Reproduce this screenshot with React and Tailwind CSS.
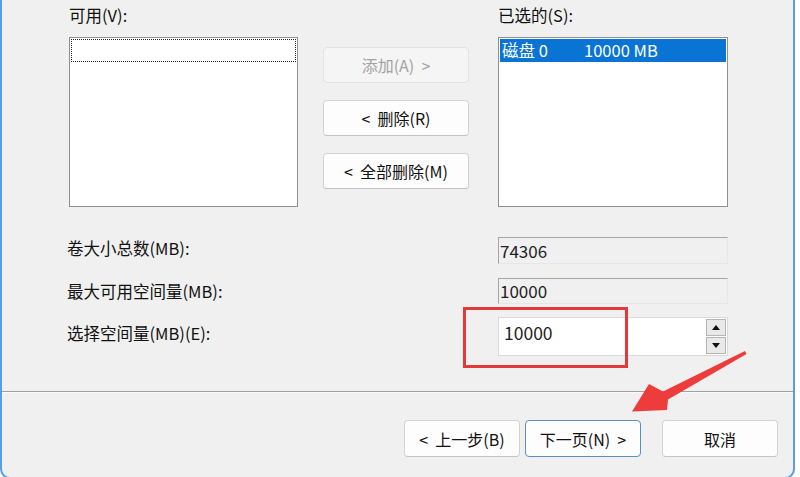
import React from "react";

const font = { fontFamily: '"Noto Sans CJK SC", "Noto Sans", sans-serif' };

function Btn({ children, disabled, primary, className = "" }) {
  let cls =
    "flex items-center justify-center rounded-[4px] border text-[16px] leading-none ";
  if (disabled) cls += "bg-[#f5f5f5] border-[#e3e3e3] text-[#a3a3a3] ";
  else if (primary)
    cls += "bg-[#fdfdfd] border-[#5b8fbf] text-[#111] ";
  else cls += "bg-[#fdfdfd] border-[#d3d3d3] border-b-[#c4c4c4] text-[#111] ";
  return <div className={cls + className}>{children}</div>;
}

export default function App() {
  return (
    <div
      className="w-[800px] h-[477px] bg-white overflow-hidden relative text-[#111]"
      style={font}
    >
      <div className="w-[795px] h-[479px] bg-[#f0f0f0] border-x-2 border-b-2 border-[#5a9fdb] rounded-b-[10px] flex flex-col">
        <div className="h-[391px] pl-[67px] pt-[4px] flex flex-col">
          <div className="flex">
            <div className="w-[229px] flex flex-col">
              <div className="h-[22px] leading-[22px] text-[16.5px]">可用(V):</div>
              <div className="mt-[11px] h-[170px] bg-white border border-[#8f8f8f] p-px">
                <div className="h-[23px] border border-dotted border-[#222]" />
              </div>
            </div>
            <div className="ml-[25px] w-[146px] pt-[43px] flex flex-col gap-[17px]">
              <Btn disabled className="h-[36px]">
                添加(A)&nbsp;&nbsp;&gt;
              </Btn>
              <Btn className="h-[36px]">&lt;&nbsp;&nbsp;删除(R)</Btn>
              <Btn className="h-[36px]">&lt;&nbsp;&nbsp;全部删除(M)</Btn>
            </div>
            <div className="ml-[29px] w-[230px] flex flex-col">
              <div className="h-[22px] leading-[22px] text-[16.5px]">已选的(S):</div>
              <div className="mt-[11px] h-[170px] bg-white border border-[#8f8f8f] p-px">
                <div className="h-[23px] bg-[#0a74d4] text-white text-[16.5px] leading-[23px] flex pl-[2px]">
                  <span className="w-[82px]">磁盘 0</span>
                  <span>10000 MB</span>
                </div>
              </div>
            </div>
          </div>

          <div className="mt-[30px] flex flex-col text-[16.5px]">
            <div className="flex items-center h-[27px]">
              <div className="w-[431px] -ml-[2px] pr-[2px] -mt-[4px]">卷大小总数(MB):</div>
              <div className="w-[230px] h-[27px] border-t border-l border-[#a5a5a5] border-r border-r-[#e6e6e6] border-b border-b-[#e6e6e6] pl-[1px] leading-[25px] text-[17px] text-[#222]">
                74306
              </div>
            </div>
            <div className="flex items-center h-[26px] mt-[14px]">
              <div className="w-[431px] -ml-[2px] pr-[2px]">最大可用空间量(MB):</div>
              <div className="w-[230px] h-[26px] border-t border-l border-[#a5a5a5] border-r border-r-[#e6e6e6] border-b border-b-[#e6e6e6] pl-[1px] leading-[24px] text-[17px] text-[#222]">
                10000
              </div>
            </div>
            <div className="flex items-center h-[39px] mt-[13px]">
              <div className="w-[431px] -ml-[2px] pr-[2px] -mt-[6px]">选择空间量(MB)(E):</div>
              <div className="w-[230px] h-[39px] bg-white border border-[#dadada] flex">
                <div className="flex-1 pl-[5px] pt-[4px] text-[17.5px] leading-[22px] text-[#222]">
                  10000
                </div>
                <div className="w-[22px] flex flex-col gap-px p-px">
                  <div className="flex-1 bg-[#e9e9e9] border border-[#b5b5b5] flex items-center justify-center">
                    <svg width="8" height="5" viewBox="0 0 8 5">
                      <path d="M0 5 L4 0 L8 5 Z" fill="#111" />
                    </svg>
                  </div>
                  <div className="flex-1 bg-[#e9e9e9] border border-[#b5b5b5] flex items-center justify-center">
                    <svg width="8" height="5" viewBox="0 0 8 5">
                      <path d="M0 0 L4 5 L8 0 Z" fill="#111" />
                    </svg>
                  </div>
                </div>
              </div>
            </div>
          </div>
        </div>

        <div className="h-px bg-[#a0a0a0]" />
        <div className="h-px bg-[#fbfbfb]" />

        <div className="flex justify-end pr-[15px] pt-[27px]">
          <Btn className="w-[116px] h-[37px]">&lt;&nbsp;&nbsp;上一步(B)</Btn>
          <Btn primary className="w-[116px] h-[37px] ml-[5px]">
            下一页(N)&nbsp;&nbsp;&gt;
          </Btn>
          <Btn className="w-[116px] h-[37px] ml-[21px]">取消</Btn>
        </div>
      </div>

      <div className="absolute left-[463px] top-[307px] w-[165px] h-[61px] border-[3px] border-[#e23a3a]" />
      <svg
        className="absolute left-0 top-0 pointer-events-none"
        width="800"
        height="477"
        viewBox="0 0 800 477"
      >
        <path
          d="M745 351 L746.5 354 L668 399.5 L667 410 L632 411.5 L649 384 L663 391.5 Z"
          fill="#ee3b3b"
        />
      </svg>
    </div>
  );
}
